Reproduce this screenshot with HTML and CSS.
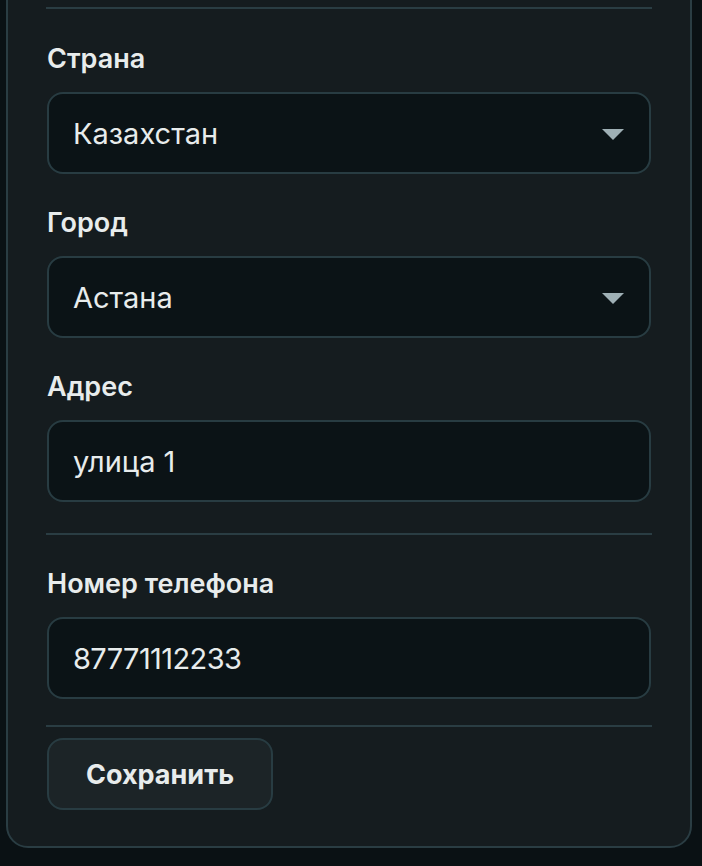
FILE: index.html
```html
<!DOCTYPE html>
<html lang="ru">
<head>
<meta charset="utf-8">
<title>Профиль</title>
<link rel="stylesheet" href="styles.css">
</head>
<body>
<div class="card">
  <hr class="divider divider-top">
  <div class="field">
    <label class="label">Страна</label>
    <div class="control select">
      <span class="value">Казахстан</span>
      <span class="arrow"></span>
    </div>
  </div>
  <div class="field">
    <label class="label">Город</label>
    <div class="control select">
      <span class="value">Астана</span>
      <span class="arrow"></span>
    </div>
  </div>
  <div class="field">
    <label class="label">Адрес</label>
    <div class="control">
      <span class="value">улица 1</span>
    </div>
  </div>
  <hr class="divider divider-mid">
  <div class="field">
    <label class="label">Номер телефона</label>
    <div class="control">
      <span class="value value-phone">87771112233</span>
    </div>
  </div>
  <hr class="divider divider-bottom">
  <button class="btn" type="button">Сохранить</button>
</div>
</body>
</html>
```
FILE: styles.css
```css
html, body {
  margin: 0;
  padding: 0;
  background: #0a1114;
  height: 866px;
  overflow: hidden;
}
body {
  font-family: Inter, "Noto Sans", "Liberation Sans", sans-serif;
  color: #e8ecec;
  padding-left: 6px;
}
.card {
  width: 686px;
  box-sizing: border-box;
  margin-top: -40px;
  padding: 45px 39px 36px 39px;
  background: #151c1f;
  border: 2px solid #2a3d43;
  border-radius: 22px;
  display: flex;
  flex-direction: column;
}
.divider {
  border: none;
  height: 2px;
  background: #2a3d43;
  margin: 0;
  width: 606px;
  margin-left: -1px;
}
.divider-top { margin-bottom: 30px; }
.divider-mid { margin-top: 31px; margin-bottom: 29px; }
.divider-bottom { margin-top: 26px; margin-bottom: 11px; }
.field {
  display: flex;
  flex-direction: column;
}
.field + .field { margin-top: 29px; }
.label {
  font-size: 27px;
  font-weight: 600;
  line-height: 40px;
  margin-bottom: 13px;
  color: #e8ecec;
}
.control {
  height: 82px;
  box-sizing: border-box;
  border: 2px solid #283c42;
  border-radius: 16px;
  background: #0b1316;
  padding: 0 25px 0 24px;
  display: flex;
  align-items: center;
  justify-content: space-between;
}
.value {
  font-size: 29px;
  font-weight: 400;
  color: #e8ecec;
}
.value-phone {
  letter-spacing: -0.6px;
}
.arrow {
  width: 0;
  height: 0;
  border-left: 11px solid transparent;
  border-right: 11px solid transparent;
  border-top: 11px solid #9fb0b5;
  margin-top: 3px;
}
.btn {
  align-self: flex-start;
  width: 226px;
  height: 72px;
  box-sizing: border-box;
  border: 2px solid #283c42;
  border-radius: 16px;
  background: #1c2427;
  color: #e8ecec;
  font-family: Inter, "Noto Sans", "Liberation Sans", sans-serif;
  font-size: 27px;
  font-weight: 700;
  padding: 0;
}
```
